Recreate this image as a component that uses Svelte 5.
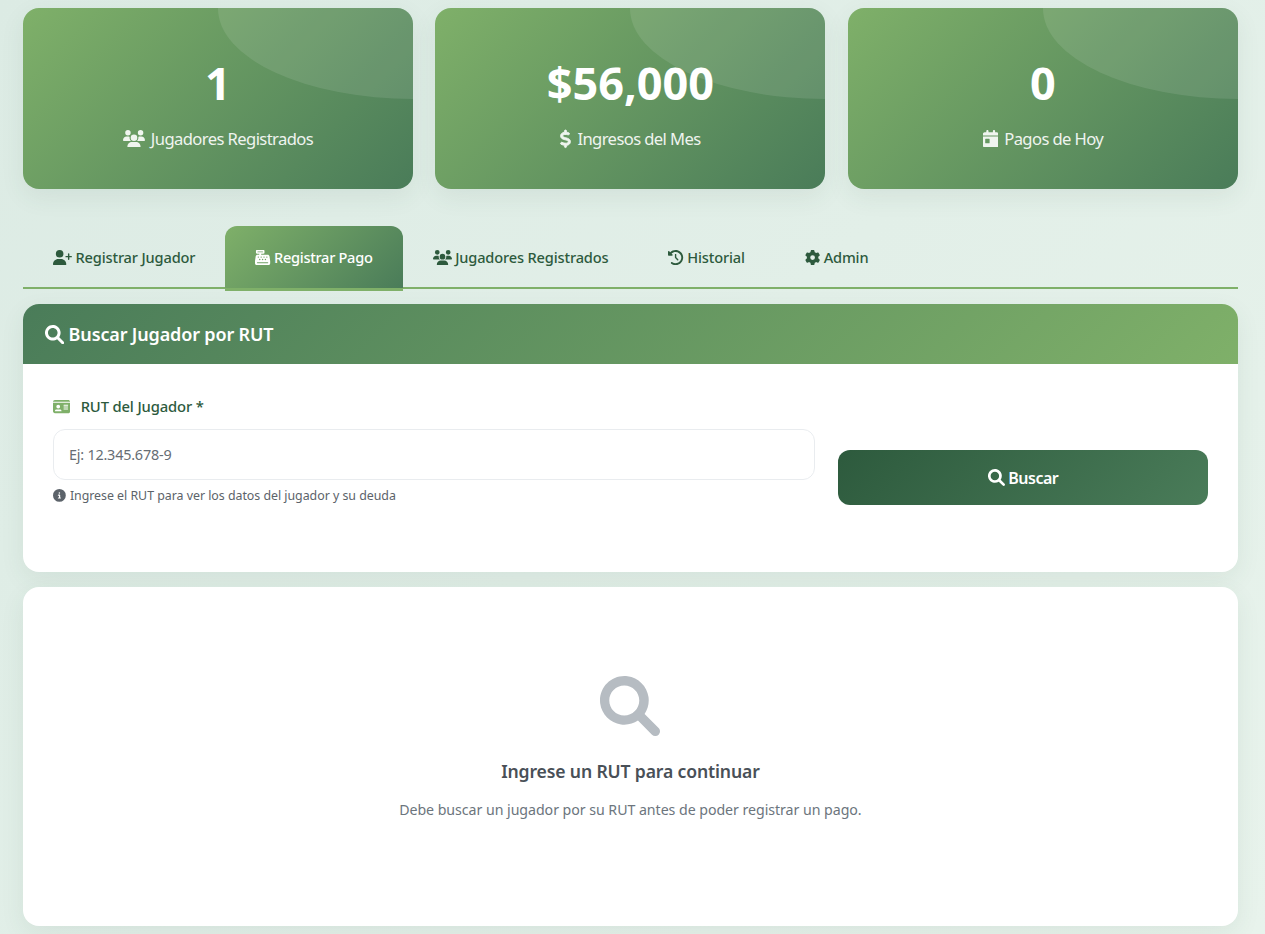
<script>
  const paths = {
    search: [512, 'M500.3 443.7l-119.7-119.7c27.22-40.41 40.65-90.9 33.46-144.7C401.8 87.79 326.8 13.32 235.2 1.723C99.01-15.51-15.51 99.01 1.724 235.2c11.6 91.64 86.08 166.7 177.6 178.9c53.8 7.189 104.3-6.236 144.7-33.46l119.7 119.7c15.62 15.62 40.95 15.62 56.57 0C515.9 484.7 515.9 459.3 500.3 443.7zM79.1 208c0-70.58 57.42-128 128-128s128 57.42 128 128c0 70.58-57.42 128-128 128S79.1 278.6 79.1 208z'],
    users: [640, 'M144 0a80 80 0 1 1 0 160A80 80 0 1 1 144 0zM512 0a80 80 0 1 1 0 160A80 80 0 1 1 512 0zM0 298.7C0 239.8 47.8 192 106.7 192h42.7c15.9 0 31 3.5 44.6 9.7c-1.3 7.2-1.9 14.7-1.9 22.3c0 38.2 16.8 72.5 43.3 96c-.2 0-.4 0-.7 0H21.3C9.6 320 0 310.4 0 298.7zM405.3 320c-.2 0-.4 0-.7 0c26.6-23.5 43.3-57.8 43.3-96c0-7.6-.7-15-1.9-22.3c13.6-6.3 28.7-9.7 44.6-9.7h42.7C592.2 192 640 239.8 640 298.7c0 11.8-9.6 21.3-21.3 21.3H405.3zM224 224a96 96 0 1 1 192 0 96 96 0 1 1 -192 0zM128 485.3C128 411.7 187.7 352 261.3 352H378.7C452.3 352 512 411.7 512 485.3c0 14.7-11.9 26.7-26.7 26.7H154.7c-14.7 0-26.7-11.9-26.7-26.7z'],
    userPlus: [640, 'M96 128a128 128 0 1 1 256 0A128 128 0 1 1 96 128zM0 482.3C0 383.8 79.8 304 178.3 304h91.4C368.2 304 448 383.8 448 482.3c0 16.4-13.3 29.7-29.7 29.7H29.7C13.3 512 0 498.7 0 482.3zM504 312V248H440c-13.3 0-24-10.7-24-24s10.7-24 24-24h64V136c0-13.3 10.7-24 24-24s24 10.7 24 24v64h64c13.3 0 24 10.7 24 24s-10.7 24-24 24H552v64c0 13.3-10.7 24-24 24s-24-10.7-24-24z'],
    dollar: [320, 'M160 0C177.7 0 192 14.33 192 32V67.68C193.6 67.89 195.1 68.12 196.7 68.35C207.3 69.93 238.9 75.02 251.9 78.31C268.1 82.65 279.4 100.1 275 117.2C270.7 134.3 253.3 144.7 236.1 140.4C226.8 137.1 198.5 133.3 187.3 131.7C155.2 126.9 127.7 129.3 108.8 136.5C90.52 143.5 82.93 153.4 80.92 164.5C78.98 175.2 80.45 181.3 82.21 185.1C84.1 189.1 87.79 193.6 95.14 198.5C111.4 209.2 136.2 216.4 168.4 225.1L171.2 225.9C199.6 233.6 234.4 243.1 260.2 260.2C274.3 269.6 287.6 282.3 295.8 299.9C304.1 317.7 305.9 337.7 302.1 358.1C295.1 397 268.1 422.4 236.4 435.6C222.8 441.2 207.8 444.8 192 446.6V480C192 497.7 177.7 512 160 512C142.3 512 128 497.7 128 480V445.1C127.6 445.1 127.1 444.1 126.7 444.9L126.5 444.9C102.2 441.1 62.07 430.6 35 418.6C18.85 411.4 11.58 392.5 18.76 376.3C25.94 360.2 44.85 352.9 60.1 360.1C81.9 369.4 116.3 378.5 136.2 381.6C168.2 386.4 194.5 383.6 212.3 376.4C229.2 369.5 236.9 359.5 239.1 347.5C241 336.8 239.6 330.8 237.8 326.9C235.9 322.9 232.2 318.4 224.9 313.5C208.6 302.8 183.8 295.6 151.6 286.9L148.8 286.1C120.4 278.4 85.58 268.9 59.76 251.8C45.65 242.4 32.43 229.7 24.22 212.1C15.89 194.3 14.08 174.3 17.95 153C24.94 114.1 53.52 89.44 86.12 76.4C99.4 71.09 114.1 67.52 128 65.59V32C128 14.33 142.3 0 160 0V0z'],
    calendar: [448, 'M128 0c17.7 0 32 14.3 32 32V64H288V32c0-17.7 14.3-32 32-32s32 14.3 32 32V64h48c26.5 0 48 21.5 48 48v48H0V112C0 85.5 21.5 64 48 64H96V32c0-17.7 14.3-32 32-32zM0 192H448V464c0 26.5-21.5 48-48 48H48c-26.5 0-48-21.5-48-48V192zm80 64c-8.8 0-16 7.2-16 16v96c0 8.8 7.2 16 16 16h96c8.8 0 16-7.2 16-16V272c0-8.8-7.2-16-16-16H80z'],
    register: [512, 'M64 0C46.3 0 32 14.3 32 32V96c0 17.7 14.3 32 32 32h80v32H87c-31.6 0-58.5 23.1-63.3 54.4L1.1 364.1C.4 368.8 0 373.6 0 378.4V448c0 35.3 28.7 64 64 64H448c35.3 0 64-28.7 64-64V378.4c0-4.8-.4-9.6-1.1-14.4L488.2 214.4C483.5 183.1 456.6 160 425 160H208V128h80c17.7 0 32-14.3 32-32V32c0-17.7-14.3-32-32-32H64zM96 48H256c8.8 0 16 7.2 16 16s-7.2 16-16 16H96c-8.8 0-16-7.2-16-16s7.2-16 16-16zM64 432c0-8.8 7.2-16 16-16H432c8.8 0 16 7.2 16 16s-7.2 16-16 16H80c-8.8 0-16-7.2-16-16zm48-168a24 24 0 1 1 0-48 24 24 0 1 1 0 48zm120-24a24 24 0 1 1 -48 0 24 24 0 1 1 48 0zM160 344a24 24 0 1 1 0-48 24 24 0 1 1 0 48zM328 240a24 24 0 1 1 -48 0 24 24 0 1 1 48 0zM256 344a24 24 0 1 1 0-48 24 24 0 1 1 0 48zM424 240a24 24 0 1 1 -48 0 24 24 0 1 1 48 0zM352 344a24 24 0 1 1 0-48 24 24 0 1 1 0 48z'],
    history: [512, 'M75 75L41 41C25.9 25.9 0 36.6 0 57.9V168c0 13.3 10.7 24 24 24H134.1c21.4 0 32.1-25.9 17-41l-30.8-30.8C155 85.5 203 64 256 64c106 0 192 86 192 192s-86 192-192 192c-40.8 0-78.6-12.7-109.7-34.4c-14.5-10.1-34.4-6.6-44.6 7.9s-6.6 34.4 7.9 44.6C151.2 495 201.7 512 256 512c141.4 0 256-114.6 256-256S397.4 0 256 0C185.3 0 121.3 28.7 75 75zm181 53c-13.3 0-24 10.7-24 24V256c0 6.4 2.5 12.5 7 17l72 72c9.4 9.4 24.6 9.4 33.9 0s9.4-24.6 0-33.9l-65-65V152c0-13.3-10.7-24-24-24z'],
    gear: [512, 'M495.9 166.6c3.2 8.7 .5 18.4-6.4 24.6l-43.3 39.4c1.1 8.3 1.7 16.8 1.7 25.4s-.6 17.1-1.7 25.4l43.3 39.4c6.9 6.2 9.6 15.9 6.4 24.6c-4.4 11.9-9.7 23.3-15.8 34.3l-4.7 8.1c-6.6 11-14 21.4-22.1 31.2c-5.9 7.2-15.7 9.6-24.5 6.8l-55.7-17.7c-13.4 10.3-28.2 18.9-44 25.4l-12.5 57.1c-2 9.1-9 16.3-18.2 17.8c-13.8 2.3-28 3.5-42.5 3.5s-28.7-1.2-42.5-3.5c-9.2-1.5-16.2-8.7-18.2-17.8l-12.5-57.1c-15.8-6.5-30.6-15.1-44-25.4L83.1 425.9c-8.8 2.8-18.6 .3-24.5-6.8c-8.1-9.8-15.5-20.2-22.1-31.2l-4.7-8.1c-6.1-11-11.4-22.4-15.8-34.3c-3.2-8.7-.5-18.4 6.4-24.6l43.3-39.4C64.6 273.1 64 264.6 64 256s.6-17.1 1.7-25.4L22.4 191.2c-6.9-6.2-9.6-15.9-6.4-24.6c4.4-11.9 9.7-23.3 15.8-34.3l4.7-8.1c6.6-11 14-21.4 22.1-31.2c5.9-7.2 15.7-9.6 24.5-6.8l55.7 17.7c13.4-10.3 28.2-18.9 44-25.4l12.5-57.1c2-9.1 9-16.3 18.2-17.8C227.3 1.2 241.5 0 256 0s28.7 1.2 42.5 3.5c9.2 1.5 16.2 8.7 18.2 17.8l12.5 57.1c15.8 6.5 30.6 15.1 44 25.4l55.7-17.7c8.8-2.8 18.6-.3 24.5 6.8c8.1 9.8 15.5 20.2 22.1 31.2l4.7 8.1c6.1 11 11.4 22.4 15.8 34.3zM256 336a80 80 0 1 0 0-160 80 80 0 1 0 0 160z'],
    idCard: [576, 'M0 96l576 0c0-35.3-28.7-64-64-64H64C28.7 32 0 60.7 0 96zm0 32V416c0 35.3 28.7 64 64 64H512c35.3 0 64-28.7 64-64V128H0zM64 405.3c0-29.5 23.9-53.3 53.3-53.3H234.7c29.5 0 53.3 23.9 53.3 53.3c0 5.9-4.8 10.7-10.7 10.7H74.7c-5.9 0-10.7-4.8-10.7-10.7zM176 192a64 64 0 1 1 0 128 64 64 0 1 1 0-128zm176 16c0-8.8 7.2-16 16-16H496c8.8 0 16 7.2 16 16s-7.2 16-16 16H368c-8.8 0-16-7.2-16-16zm0 64c0-8.8 7.2-16 16-16H496c8.8 0 16 7.2 16 16s-7.2 16-16 16H368c-8.8 0-16-7.2-16-16zm0 64c0-8.8 7.2-16 16-16H496c8.8 0 16 7.2 16 16s-7.2 16-16 16H368c-8.8 0-16-7.2-16-16z'],
    info: [512, 'M256 512A256 256 0 1 0 256 0a256 256 0 1 0 0 512zM216 336h24V272H216c-13.3 0-24-10.7-24-24s10.7-24 24-24h48c13.3 0 24 10.7 24 24v88h8c13.3 0 24 10.7 24 24s-10.7 24-24 24H216c-13.3 0-24-10.7-24-24s10.7-24 24-24zm40-208a32 32 0 1 1 0 64 32 32 0 1 1 0-64z']
  };

  const stats = [
    { value: '1', label: 'Jugadores Registrados', icon: 'users' },
    { value: '$56,000', label: 'Ingresos del Mes', icon: 'dollar' },
    { value: '0', label: 'Pagos de Hoy', icon: 'calendar' }
  ];

  const tabs = [
    { label: 'Registrar Jugador', icon: 'userPlus' },
    { label: 'Registrar Pago', icon: 'register', active: true },
    { label: 'Jugadores Registrados', icon: 'users' },
    { label: 'Historial', icon: 'history' },
    { label: 'Admin', icon: 'gear' }
  ];

  let rut = $state('');
</script>

{#snippet icon(name, size, cls = '')}
  <svg class={`icon ${cls}`} style={`height: ${size}px`} viewBox={`0 0 ${paths[name][0]} 512`} fill="currentColor" aria-hidden="true">
    <path d={paths[name][1]} />
  </svg>
{/snippet}

<div class="page">
  <section class="stats">
    {#each stats as stat}
      <div class="stat-card">
        <div class="stat-value">{stat.value}</div>
        <div class="stat-label">{@render icon(stat.icon, 17.6, stat.icon)} {stat.label}</div>
      </div>
    {/each}
  </section>

  <nav class="tabs">
    {#each tabs as tab}
      <button class="tab" class:active={tab.active}>{@render icon(tab.icon, 15.2)} {tab.label}</button>
    {/each}
  </nav>

  <section class="card">
    <header class="card-header">{@render icon('search', 19.2)} Buscar Jugador por RUT</header>
    <div class="card-body">
      <div class="field">
        <label for="rut">{@render icon('idCard', 15.2, 'label-icon')} RUT del Jugador *</label>
        <input id="rut" type="text" placeholder="Ej: 12.345.678-9" bind:value={rut} />
        <small>{@render icon('info', 12.8)} Ingrese el RUT para ver los datos del jugador y su deuda</small>
      </div>
      <button class="search-btn">{@render icon('search', 17)} Buscar</button>
    </div>
  </section>

  <section class="card empty">
    <svg class="empty-icon" viewBox="0 0 512 512" fill="currentColor" aria-hidden="true">
      <path d={paths.search[1]} />
    </svg>
    <h3>Ingrese un RUT para continuar</h3>
    <p>Debe buscar un jugador por su RUT antes de poder registrar un pago.</p>
  </section>
</div>

<style>
  :global(body) {
    background: linear-gradient(135deg, #dcebe4 0%, #e8f3ec 100%);
    min-height: 934px;
    font-family: 'Noto Sans', 'Open Sans', sans-serif;
  }

  .page {
    padding: 8px 27.1px 8px 22.9px;
    height: 934px;
    box-sizing: border-box;
    overflow: hidden;
  }

  .icon {
    width: auto;
    vertical-align: -0.15em;
  }

  .dollar {
    stroke: currentColor;
    stroke-width: 26;
    overflow: visible;
  }

  .stats {
    display: grid;
    grid-template-columns: repeat(3, 1fr);
    gap: 22.5px;
  }

  .stat-card {
    position: relative;
    overflow: hidden;
    height: 181px;
    box-sizing: border-box;
    padding-top: 45px;
    border-radius: 16px;
    background: linear-gradient(135deg, #7fb069, #4a7c59);
    box-shadow: 0 8px 25px rgba(45, 90, 61, 0.08);
    color: #fff;
    text-align: center;
  }

  .stat-card::before {
    content: '';
    position: absolute;
    top: -50%;
    right: -50%;
    width: 100%;
    height: 100%;
    border-radius: 50%;
    background: rgba(255, 255, 255, 0.1);
  }

  .stat-value {
    font-size: 45px;
    font-weight: 700;
    line-height: 60px;
    margin-bottom: 13px;
  }

  .stat-label {
    font-size: 16.6px;
    line-height: 26px;
    letter-spacing: -0.6px;
    opacity: 0.9;
  }

  .stat-label .icon {
    margin-right: 2.5px;
  }

  .tabs {
    display: flex;
    margin-top: 37px;
    height: 61px;
    border-bottom: 2px solid #7fb069;
  }

  .tab {
    height: 65px;
    padding: 0 30px 3px;
    border: none;
    border-radius: 12px 12px 0 0;
    background: transparent;
    color: #2d5a3d;
    font-family: inherit;
    font-size: 14.6px;
    font-weight: 500;
    letter-spacing: -0.15px;
    white-space: nowrap;
  }

  .tab.active {
    padding-bottom: 0;
    background: linear-gradient(135deg, #7fb069, #4a7c59);
    color: #fff;
    border-bottom: 3px solid #7fb069;
    letter-spacing: -0.3px;
  }

  .card {
    background: #fff;
    border-radius: 16px;
    box-shadow: 0 8px 25px rgba(45, 90, 61, 0.08);
    overflow: hidden;
  }

  .tabs + .card {
    margin-top: 15px;
    height: 268px;
  }

  .card-header {
    height: 60px;
    line-height: 60px;
    padding-left: 22px;
    background: linear-gradient(135deg, #4a7c59, #7fb069);
    color: #fff;
    font-size: 18px;
    font-weight: 600;
    letter-spacing: -0.15px;
  }

  .card-body {
    display: flex;
    align-items: flex-start;
    gap: 23px;
    padding: 30px;
  }

  .field {
    flex: 0 0 762px;
    box-sizing: border-box;
  }

  label {
    display: block;
    margin-bottom: 10px;
    color: #2d5a3d;
    font-size: 14.8px;
    line-height: 25px;
    font-weight: 500;
    letter-spacing: -0.15px;
  }

  .label-icon {
    color: #7fb069;
    margin-right: 7px;
  }

  input {
    display: block;
    width: 100%;
    height: 51px;
    box-sizing: border-box;
    padding: 0 15px;
    border: 1px solid #e9ecef;
    border-radius: 12px;
    font-family: inherit;
    font-size: 14.4px;
    letter-spacing: -0.2px;
    outline: none;
  }

  input::placeholder {
    color: #666d74;
    opacity: 1;
  }

  small {
    display: block;
    margin-top: 7px;
    color: #5c636a;
    font-size: 12.4px;
    line-height: 18px;
    letter-spacing: -0.03px;
  }

  small .icon {
    margin-right: 1px;
  }

  .search-btn {
    flex: 1;
    height: 55px;
    margin-top: 56px;
    border: none;
    border-radius: 12px;
    background: linear-gradient(135deg, #2d5a3d, #4a7c59);
    color: #fff;
    font-family: inherit;
    font-size: 16px;
    font-weight: 600;
    letter-spacing: -0.5px;
  }

  .empty {
    margin-top: 15px;
    height: 339px;
    padding-top: 89px;
    box-sizing: border-box;
    text-align: center;
  }

  .empty-icon {
    display: block;
    width: 60px;
    height: 60px;
    margin: 0 auto 22px;
    color: #b6bcc2;
  }

  h3 {
    margin: 0 0 15px;
    color: #495057;
    font-size: 17.6px;
    line-height: 26px;
    font-weight: 600;
    letter-spacing: -0.15px;
  }

  p {
    margin: 0;
    color: #6c757d;
    font-size: 14.2px;
    line-height: 22px;
    letter-spacing: -0.05px;
  }
</style>
